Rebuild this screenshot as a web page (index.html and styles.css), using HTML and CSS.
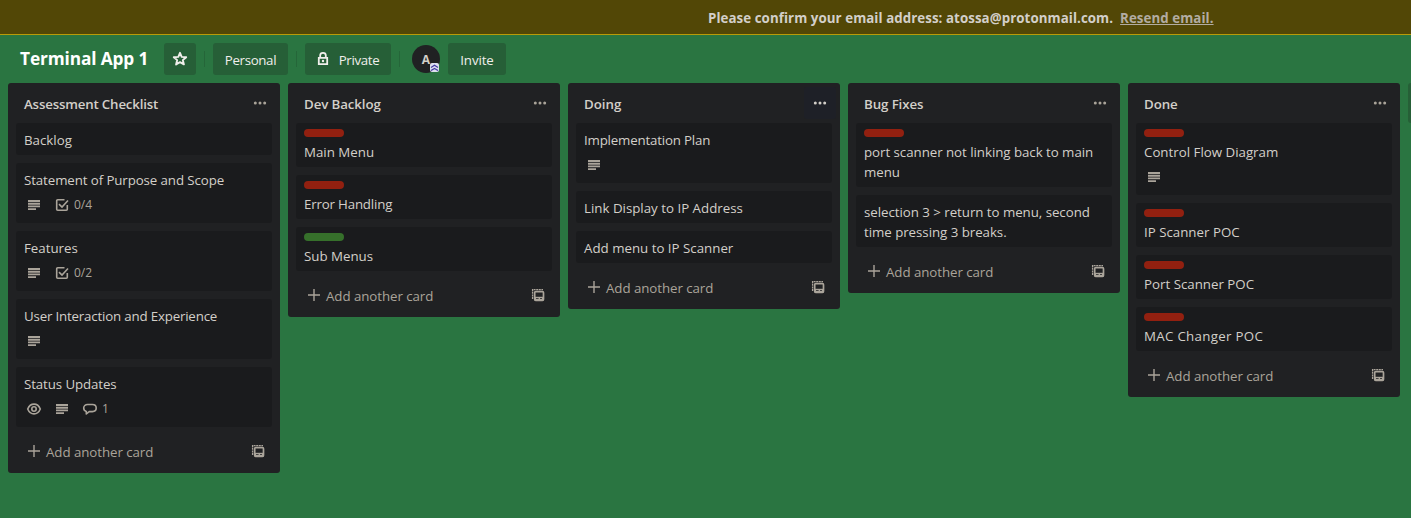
FILE: index.html
```html
<!DOCTYPE html>
<html lang="en">
<head>
<meta charset="utf-8">
<title>Terminal App 1</title>
<link rel="stylesheet" href="styles.css">
</head>
<body>
<svg class="sprite" aria-hidden="true">
  <symbol id="lines" viewBox="0 0 16 16"><path fill="currentColor" d="M2 3h12v1.900H2zM2 5.800h12v1.900H2zM2 8.600h12v1.700H2zM2 11.200h8v1.800H2z"/></symbol>
  <symbol id="check" viewBox="0 0 16 16"><path fill="none" stroke="currentColor" stroke-width="1.600" d="M10.500 2.700H3.700a1 1 0 0 0-1 1v8.600a1 1 0 0 0 1 1h8.600a1 1 0 0 0 1-1V8M5 7.100l3 3 6-6.600"/></symbol>
  <symbol id="eye" viewBox="0 0 16 16"><g fill="none" stroke="currentColor" stroke-width="1.600"><path d="M1.700 8C3 4.800 5.200 3.100 8 3.100S13 4.800 14.300 8C13 11.200 10.800 12.900 8 12.900S3 11.200 1.700 8z"/><circle cx="8" cy="8" r="2.200"/></g></symbol>
  <symbol id="comment" viewBox="0 0 16 16"><path fill="none" stroke="currentColor" stroke-width="1.600" stroke-linejoin="round" d="M5.600 3.500h4.800c2.300 0 3.800 1.500 3.800 3.500s-1.500 3.600-3.800 3.600H7.200L4.300 13V10.400C2.700 9.900 1.700 8.600 1.700 7c0-2 1.600-3.500 3.900-3.500z"/></symbol>
  <symbol id="plus" viewBox="0 0 16 16"><path fill="none" stroke="currentColor" stroke-width="1.400" d="M8 2v12M2 8h12"/></symbol>
  <symbol id="template" viewBox="0 0 16 16"><path fill="none" stroke="currentColor" stroke-width="1.300" stroke-dasharray="2 .6" d="M2.600 12V2.600H13"/><rect x="4.700" y="4.700" width="8.800" height="8.600" rx="1" fill="none" stroke="currentColor" stroke-width="1.700"/><path fill="currentColor" d="M4.500 9.800h9v3.700h-9z"/><path fill="#202123" d="M6 11.200h2.600v.9H6zM10 11.200h2v.9h-2z"/></symbol>
  <symbol id="dots" viewBox="0 0 16 16"><g fill="currentColor"><circle cx="3.300" cy="8" r="1.500"/><circle cx="8" cy="8" r="1.500"/><circle cx="12.700" cy="8" r="1.500"/></g></symbol>
</svg>

<div class="banner"><span class="banner-text">Please confirm your email address: atossa@protonmail.com.</span><a class="resend">Resend email.</a></div>

<header class="board-header">
  <h1 class="board-name">Terminal App 1</h1>
  <button class="btn btn-star"><svg class="icon" viewBox="0 0 16 16"><path fill="none" stroke="currentColor" stroke-width="1.900" stroke-linejoin="round" d="M8 1.800l1.700 4.100 4.500.3-3.400 2.900 1.100 4.300L8 11.100l-3.900 2.300 1.100-4.300-3.400-2.900 4.500-.3z"/></svg></button>
  <span class="divider"></span>
  <button class="btn btn-personal">Personal</button>
  <span class="divider"></span>
  <button class="btn btn-private"><svg class="icon" viewBox="0 0 16 16"><path fill="none" stroke="currentColor" stroke-width="1.800" d="M5.200 7V4.300C5.200 2.700 6.300 1.800 8 1.800s2.800.9 2.800 2.500V7M3.800 6.900h8.400v6.300H3.800z"/><circle cx="8" cy="10" r="1.200" fill="currentColor"/></svg><span>Private</span></button>
  <span class="divider"></span>
  <div class="avatar">A<svg class="admin" viewBox="0 0 9 9"><rect width="9" height="9" rx="2" fill="#dcdff0"/><path fill="none" stroke="#4338a0" stroke-width="1.200" d="M1 4.400l3.500-2.200L8 4.400M1 7.600L4.500 5.400 8 7.600"/></svg></div>
  <button class="btn btn-invite">Invite</button>
</header>

<main class="board">
  <section class="list">
    <div class="list-header"><h2 class="tight">Assessment Checklist</h2><span class="menu"><svg class="icon"><use href="#dots"/></svg></span></div>
    <div class="cards">
      <article class="card"><p>Backlog</p></article>
      <article class="card"><p class="snug">Statement of Purpose and Scope</p><div class="badges"><svg class="icon"><use href="#lines"/></svg><span class="badge"><svg class="icon"><use href="#check"/></svg>0/4</span></div></article>
      <article class="card"><p>Features</p><div class="badges"><svg class="icon"><use href="#lines"/></svg><span class="badge"><svg class="icon"><use href="#check"/></svg>0/2</span></div></article>
      <article class="card"><p class="tight">User Interaction and Experience</p><div class="badges"><svg class="icon"><use href="#lines"/></svg></div></article>
      <article class="card"><p class="snug">Status Updates</p><div class="badges"><svg class="icon"><use href="#eye"/></svg><svg class="icon"><use href="#lines"/></svg><span class="badge"><svg class="icon"><use href="#comment"/></svg>1</span></div></article>
    </div>
    <div class="list-footer"><svg class="icon"><use href="#plus"/></svg><span>Add another card</span><svg class="icon template"><use href="#template"/></svg></div>
  </section>

  <section class="list">
    <div class="list-header"><h2 class="snug">Dev Backlog</h2><span class="menu"><svg class="icon"><use href="#dots"/></svg></span></div>
    <div class="cards">
      <article class="card"><i class="label red"></i><p>Main Menu</p></article>
      <article class="card"><i class="label red"></i><p class="tight">Error Handling</p></article>
      <article class="card"><i class="label green"></i><p>Sub Menus</p></article>
    </div>
    <div class="list-footer"><svg class="icon"><use href="#plus"/></svg><span>Add another card</span><svg class="icon template"><use href="#template"/></svg></div>
  </section>

  <section class="list">
    <div class="list-header"><h2>Doing</h2><span class="menu menu-active"><svg class="icon"><use href="#dots"/></svg></span></div>
    <div class="cards">
      <article class="card"><p class="tight">Implementation Plan</p><div class="badges"><svg class="icon"><use href="#lines"/></svg></div></article>
      <article class="card"><p>Link Display to IP Address</p></article>
      <article class="card"><p>Add menu to IP Scanner</p></article>
    </div>
    <div class="list-footer"><svg class="icon"><use href="#plus"/></svg><span>Add another card</span><svg class="icon template"><use href="#template"/></svg></div>
  </section>

  <section class="list">
    <div class="list-header"><h2 class="snug">Bug Fixes</h2><span class="menu"><svg class="icon"><use href="#dots"/></svg></span></div>
    <div class="cards">
      <article class="card"><i class="label red"></i><p class="slight">port scanner not linking back to main<br>menu</p></article>
      <article class="card"><p class="slight">selection 3 &gt; return to menu, second<br>time pressing 3 breaks.</p></article>
    </div>
    <div class="list-footer"><svg class="icon"><use href="#plus"/></svg><span>Add another card</span><svg class="icon template"><use href="#template"/></svg></div>
  </section>

  <section class="list">
    <div class="list-header"><h2 class="snug">Done</h2><span class="menu"><svg class="icon"><use href="#dots"/></svg></span></div>
    <div class="cards">
      <article class="card"><i class="label red"></i><p>Control Flow Diagram</p><div class="badges"><svg class="icon"><use href="#lines"/></svg></div></article>
      <article class="card"><i class="label red"></i><p>IP Scanner POC</p></article>
      <article class="card"><i class="label red"></i><p>Port Scanner POC</p></article>
      <article class="card"><i class="label red"></i><p class="wide">MAC Changer POC</p></article>
    </div>
    <div class="list-footer"><svg class="icon"><use href="#plus"/></svg><span>Add another card</span><svg class="icon template"><use href="#template"/></svg></div>
  </section>
  <div class="add-list"></div>
</main>
</body>
</html>
```

FILE: styles.css
```css
* { box-sizing: border-box; }
body {
  margin: 0;
  height: 518px;
  overflow: hidden;
  background: #2a7541;
  color: #d3cfc9;
  font: 13.3px/20px "Open Sans", "Noto Sans", sans-serif;
}
h1, h2, p { margin: 0; }
.sprite { display: none; }
.icon { display: block; width: 16px; height: 16px; flex: none; }

.slight { letter-spacing: -0.04px; }
.snug { letter-spacing: -0.1px; }
.tight { letter-spacing: -0.18px; }
.wide { letter-spacing: 0.3px; }

.banner {
  display: flex;
  gap: 7px;
  height: 35px;
  padding: 8px 0 0 708px;
  background: #524706;
  border-bottom: 1px solid #b89b07;
  font-size: 13.3px;
  font-weight: 700;
  letter-spacing: 0.07px;
  white-space: nowrap;
}
.resend { color: #b2aca2; text-decoration: underline; }

.board-header {
  display: flex;
  align-items: center;
  height: 48px;
  padding-left: 20px;
  color: #f0eeeb;
}
.board-name {
  width: 144px;
  font-size: 17.3px;
  font-weight: 700;
  letter-spacing: -0.13px;
  line-height: 32px;
  color: #fff;
  white-space: nowrap;
}
.btn {
  display: flex;
  align-items: center;
  justify-content: center;
  height: 32px;
  padding: 2px 0 0;
  border: 0;
  border-radius: 3px;
  background: #265f37;
  color: inherit;
  font: inherit;
  letter-spacing: -0.35px;
}
.btn-star { width: 32px; padding: 0; }
.btn-personal { width: 75px; }
.btn-private { width: 86px; gap: 8px; padding-right: 2px; }
.btn-private .icon { margin-top: -3px; }
.btn-invite { width: 58px; margin-left: 8px; letter-spacing: -0.1px; }
.divider { width: 1px; height: 16px; margin: 0 8px; background: #256639; }
.avatar {
  position: relative;
  width: 28px;
  height: 28px;
  margin-left: 4px;
  border-radius: 50%;
  background: #202123;
  color: #d3cfc9;
  font-size: 12px;
  font-weight: 700;
  line-height: 29px;
  text-align: center;
}
.admin { position: absolute; right: 1px; bottom: 1px; width: 9px; height: 9px; }

.board { display: flex; align-items: flex-start; gap: 8px; padding-left: 8px; }
.list { flex: 0 0 272px; border-radius: 3px; background: #202123; }
.list-header {
  display: flex;
  justify-content: space-between;
  height: 40px;
  padding: 4px 4px 0 16px;
}
.list-header h2 { padding-top: 7px; font-size: 13.3px; font-weight: 600; line-height: 20px; }
.menu { width: 32px; height: 32px; padding: 8px; border-radius: 3px; color: #aaa49a; }
.menu-active { background: #1e2027; color: #d3cfc9; }
.cards { display: flex; flex-direction: column; gap: 8px; padding: 0 8px; }
.card { padding: 6px 8px; border-radius: 3px; background: #1a1b1d; white-space: nowrap; }
.card p { padding-top: 1px; margin-bottom: -1px; }
.label { display: block; width: 40px; height: 8px; margin-bottom: 4px; border-radius: 4px; }
.red { background: #922010; }
.green { background: #36702b; }
.badges {
  display: flex;
  align-items: center;
  gap: 12px;
  height: 28px;
  padding: 4px 2px 0;
  color: #aaa49a;
  font-size: 12px;
}
.badge { display: flex; align-items: center; gap: 4px; }
.list-footer {
  display: flex;
  align-items: center;
  height: 46px;
  padding: 1px 14px 0 18px;
  color: #aaa49a;
}
.list-footer span { margin-left: 4px; padding-top: 2px; letter-spacing: -0.06px; }
.template { margin-left: auto; }
.add-list { flex: 1; height: 40px; border-radius: 3px 0 0 3px; background: #265f37; }
```
